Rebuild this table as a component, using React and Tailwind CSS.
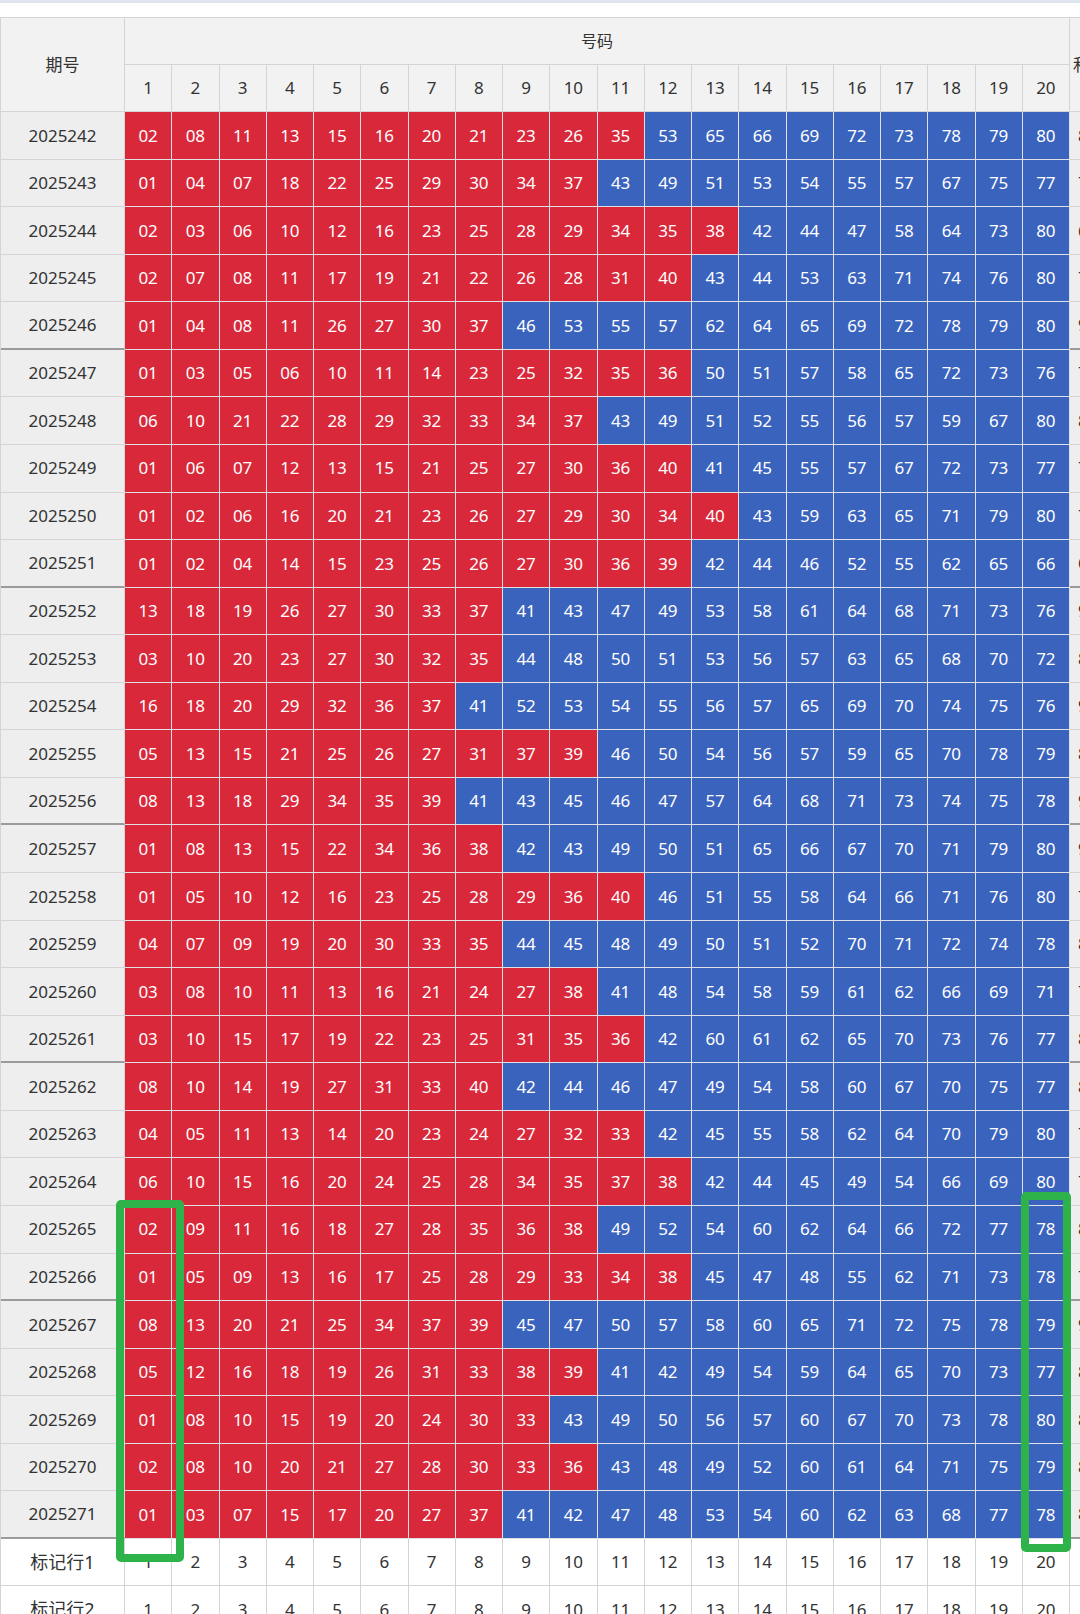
import React from "react";

const DATA = [
  ["2025242", "02 08 11 13 15 16 20 21 23 26 35 53 65 66 69 72 73 78 79 80"],
  ["2025243", "01 04 07 18 22 25 29 30 34 37 43 49 51 53 54 55 57 67 75 77"],
  ["2025244", "02 03 06 10 12 16 23 25 28 29 34 35 38 42 44 47 58 64 73 80"],
  ["2025245", "02 07 08 11 17 19 21 22 26 28 31 40 43 44 53 63 71 74 76 80"],
  ["2025246", "01 04 08 11 26 27 30 37 46 53 55 57 62 64 65 69 72 78 79 80"],
  ["2025247", "01 03 05 06 10 11 14 23 25 32 35 36 50 51 57 58 65 72 73 76"],
  ["2025248", "06 10 21 22 28 29 32 33 34 37 43 49 51 52 55 56 57 59 67 80"],
  ["2025249", "01 06 07 12 13 15 21 25 27 30 36 40 41 45 55 57 67 72 73 77"],
  ["2025250", "01 02 06 16 20 21 23 26 27 29 30 34 40 43 59 63 65 71 79 80"],
  ["2025251", "01 02 04 14 15 23 25 26 27 30 36 39 42 44 46 52 55 62 65 66"],
  ["2025252", "13 18 19 26 27 30 33 37 41 43 47 49 53 58 61 64 68 71 73 76"],
  ["2025253", "03 10 20 23 27 30 32 35 44 48 50 51 53 56 57 63 65 68 70 72"],
  ["2025254", "16 18 20 29 32 36 37 41 52 53 54 55 56 57 65 69 70 74 75 76"],
  ["2025255", "05 13 15 21 25 26 27 31 37 39 46 50 54 56 57 59 65 70 78 79"],
  ["2025256", "08 13 18 29 34 35 39 41 43 45 46 47 57 64 68 71 73 74 75 78"],
  ["2025257", "01 08 13 15 22 34 36 38 42 43 49 50 51 65 66 67 70 71 79 80"],
  ["2025258", "01 05 10 12 16 23 25 28 29 36 40 46 51 55 58 64 66 71 76 80"],
  ["2025259", "04 07 09 19 20 30 33 35 44 45 48 49 50 51 52 70 71 72 74 78"],
  ["2025260", "03 08 10 11 13 16 21 24 27 38 41 48 54 58 59 61 62 66 69 71"],
  ["2025261", "03 10 15 17 19 22 23 25 31 35 36 42 60 61 62 65 70 73 76 77"],
  ["2025262", "08 10 14 19 27 31 33 40 42 44 46 47 49 54 58 60 67 70 75 77"],
  ["2025263", "04 05 11 13 14 20 23 24 27 32 33 42 45 55 58 62 64 70 79 80"],
  ["2025264", "06 10 15 16 20 24 25 28 34 35 37 38 42 44 45 49 54 66 69 80"],
  ["2025265", "02 09 11 16 18 27 28 35 36 38 49 52 54 60 62 64 66 72 77 78"],
  ["2025266", "01 05 09 13 16 17 25 28 29 33 34 38 45 47 48 55 62 71 73 78"],
  ["2025267", "08 13 20 21 25 34 37 39 45 47 50 57 58 60 65 71 72 75 78 79"],
  ["2025268", "05 12 16 18 19 26 31 33 38 39 41 42 49 54 59 64 65 70 73 77"],
  ["2025269", "01 08 10 15 19 20 24 30 33 43 49 50 56 57 60 67 70 73 78 80"],
  ["2025270", "02 08 10 20 21 27 28 30 33 36 43 48 49 52 60 61 64 71 75 79"],
  ["2025271", "01 03 07 15 17 20 27 37 41 42 47 48 53 54 60 62 63 68 77 78"],
];

const COLS = Array.from({ length: 20 }, (_, i) => i + 1);
const FONT = { fontFamily: '"Noto Sans", "Noto Sans CJK SC", sans-serif' };

export default function App() {
  return (
    <div className="relative w-[1080px] h-[1614px] overflow-hidden bg-white" style={FONT}>
      <div className="h-[3px] bg-[#dfe6ee]" />
      <div className="h-[14px] bg-white" />
      <div className="grid grid-cols-[124px_repeat(20,47.25px)_60px] grid-rows-[47px_47px] auto-rows-[47.57px] border-l border-t border-[#d4d4d4] w-[1130px]">
        {/* header */}
        <div className="row-span-2 flex items-center justify-center bg-[#f2f2f2] border-r border-b border-[#d4d4d4] text-[17px] text-[#333]">
          期号
        </div>
        <div className="col-span-20 flex items-center justify-center bg-[#f2f2f2] border-r border-b border-[#d4d4d4] text-[16px] text-[#333]">
          号码
        </div>
        <div className="row-span-2 flex items-center pl-[3px] bg-[#f2f2f2] border-r border-b border-[#d4d4d4] text-[17px] text-[#333]">
          和值
        </div>
        {COLS.map((c) => (
          <div
            key={"h" + c}
            className="flex items-center justify-center bg-[#f2f2f2] border-r border-b border-[#d4d4d4] text-[17px] text-[#333]"
          >
            {c}
          </div>
        ))}

        {/* data rows */}
        {DATA.map(([period, nums], ri) => {
          const arr = nums.split(" ");
          const sum = arr.reduce((a, b) => a + parseInt(b, 10), 0);
          const thick = ri % 5 === 4;
          return (
            <React.Fragment key={period}>
              <div
                className={
                  "flex items-center justify-center bg-[#eeeeef] border-r border-[#d4d4d4] text-[17px] text-[#333] " +
                  (thick ? "border-b-2 border-b-[#9b9b9b]" : "border-b")
                }
              >
                {period}
              </div>
              {arr.map((n, ci) => (
                <div
                  key={ci}
                  className={
                    "flex items-center justify-center border-r border-b border-[#dfe0e6] text-[17px] text-white " +
                    (parseInt(n, 10) <= 40 ? "bg-[#d8283a]" : "bg-[#3a63bd]")
                  }
                >
                  {n}
                </div>
              ))}
              <div
                className={
                  "flex items-center pl-[8px] bg-[#eeeeef] border-r border-[#d4d4d4] text-[17px] text-[#333] " +
                  (thick ? "border-b-2 border-b-[#9b9b9b]" : "border-b")
                }
              >
                {sum}
              </div>
            </React.Fragment>
          );
        })}

        {/* marker rows */}
        {["标记行1", "标记行2"].map((label) => (
          <React.Fragment key={label}>
            <div className="flex items-center justify-center bg-white border-r border-b border-[#d4d4d4] text-[18px] text-[#333]">
              {label}
            </div>
            {COLS.map((c) => (
              <div
                key={c}
                className="flex items-center justify-center bg-white border-r border-b border-[#d4d4d4] text-[17px] text-[#333]"
              >
                {c}
              </div>
            ))}
            <div className="bg-white border-r border-b border-[#d4d4d4]" />
          </React.Fragment>
        ))}
      </div>

      {/* green highlight boxes */}
      <div className="absolute left-[116px] top-[1200px] w-[68px] h-[362px] border-[8px] border-[#2eb34b] rounded-[5px]" />
      <div className="absolute left-[1021px] top-[1192px] w-[50px] h-[360px] border-[8px] border-[#2eb34b] rounded-[5px]" />
    </div>
  );
}
